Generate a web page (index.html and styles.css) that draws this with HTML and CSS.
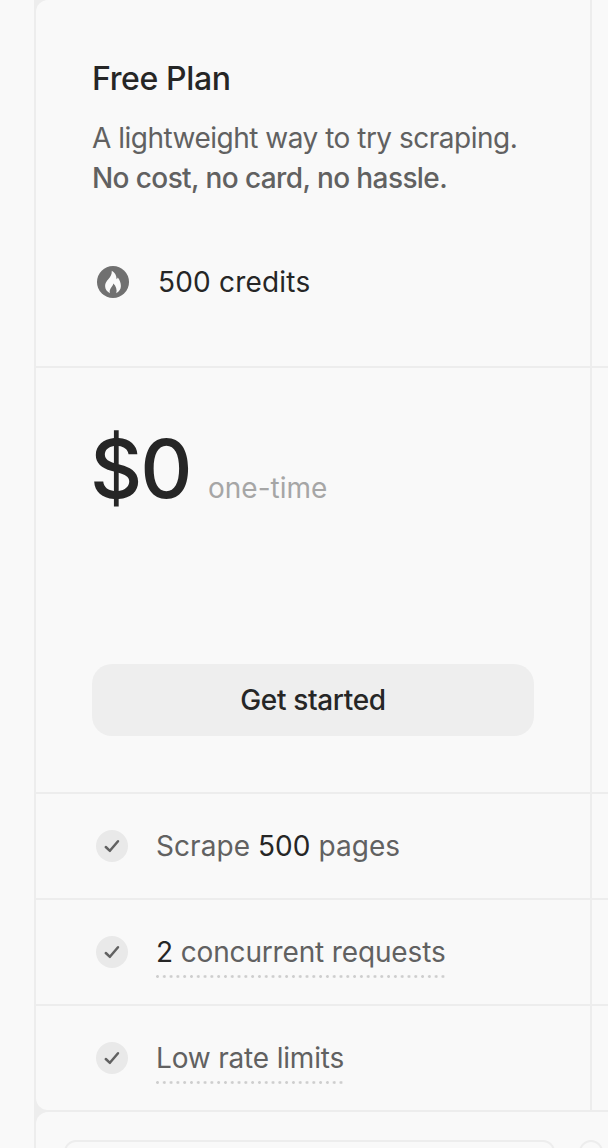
FILE: index.html
```html
<!DOCTYPE html>
<html lang="en">
<head>
<meta charset="utf-8">
<title>Pricing</title>
<link rel="stylesheet" href="styles.css">
</head>
<body>
<main class="pricing">
  <div class="plans">
    <article class="plan">
      <header class="intro">
        <h2 class="name">Free Plan</h2>
        <p class="desc"><span class="line-a">A lightweight way to try scraping.</span><br><strong class="line-b">No cost, no card, no hassle.</strong></p>
        <div class="credits">
          <svg class="icon" viewBox="0 0 32 32"><circle cx="16" cy="16" r="16" fill="#707070"/><path d="M14.8 4.8C17.8 6.4 19.4 9 19.6 13.2C20.1 12.9 20.5 12.3 20.8 11.6C22.9 14.3 23.9 17.3 23.9 20C23.9 23 22.4 25.4 19.3 27.2C20.2 23.6 19 20.2 16.3 17.6C16.1 19.8 14.6 20.8 13.6 22.4C12.6 24 12.5 25.4 12.9 27.2C9.8 25.6 8.1 23.2 8.1 20C8.1 17.2 9.4 15.4 11.3 13.2C13.4 10.8 14.9 8.8 14.8 4.8Z" fill="#f9f9f9"/></svg>
          <span class="credits-text">500 credits</span>
        </div>
      </header>
      <section class="cost">
        <div class="price"><span class="amount">$0</span><span class="period">one-time</span></div>
        <button class="cta" type="button"><span>Get started</span></button>
      </section>
      <div class="feature">
        <svg class="icon" viewBox="0 0 32 32"><circle cx="16" cy="16" r="16" fill="#e9e9e9"/><path d="M9.8 17L13.9 20.8L22 11.2" fill="none" stroke="#616161" stroke-width="2.5" stroke-linecap="round" stroke-linejoin="round"/></svg>
        <span class="label scrape">Scrape <b>500</b> pages</span>
      </div>
      <div class="feature">
        <svg class="icon" viewBox="0 0 32 32"><circle cx="16" cy="16" r="16" fill="#e9e9e9"/><path d="M9.8 17L13.9 20.8L22 11.2" fill="none" stroke="#616161" stroke-width="2.5" stroke-linecap="round" stroke-linejoin="round"/></svg>
        <span class="label hint requests"><b>2</b> concurrent requests</span>
      </div>
      <div class="feature last">
        <svg class="icon" viewBox="0 0 32 32"><circle cx="16" cy="16" r="16" fill="#e9e9e9"/><path d="M9.8 17L13.9 20.8L22 11.2" fill="none" stroke="#616161" stroke-width="2.5" stroke-linecap="round" stroke-linejoin="round"/></svg>
        <span class="label hint limits">Low rate limits</span>
      </div>
    </article>
    <article class="plan next">
      <div class="intro"></div>
      <div class="cost"></div>
      <div class="feature"></div>
      <div class="feature"></div>
      <div class="feature"></div>
    </article>
  </div>
  <section class="below">
    <div class="box wide"></div>
    <div class="box round"></div>
  </section>
</main>
</body>
</html>
```
FILE: styles.css
```css
* { box-sizing: border-box; }
body {
  margin: 0;
  height: 1148px;
  overflow: hidden;
  background: #f9f9f9;
  color: #262626;
  font-family: Inter, "Liberation Sans", sans-serif;
  font-size: 28px;
  line-height: 40px;
}
h2, p { margin: 0; font-weight: inherit; }
.pricing {
  display: grid;
  grid-template-rows: 1110px 36px;
  gap: 2px;
  height: 1148px;
  margin-left: 34px;
  padding-left: 2px;
  background: #ededed;
}
.plans { display: grid; grid-template-columns: 554px 1fr; gap: 2px; }
.plan { display: grid; grid-template-rows: 366px 424px 104px 104px 104px; gap: 2px; }
.intro, .cost, .feature { background: #f9f9f9; }
.plan:first-child .intro { border-top-left-radius: 12px; padding: 59px 56px 0; }
.last { border-bottom-left-radius: 12px; }
.name { font-size: 32px; font-weight: 500; letter-spacing: -0.36px; white-space: nowrap; }
.desc { margin-top: 19px; color: #616161; white-space: nowrap; }
.line-a { letter-spacing: -0.5px; }
.line-b { font-weight: 500; letter-spacing: -0.6px; }
.credits { display: flex; align-items: center; gap: 29px; margin-top: 64px; padding-left: 5px; }
.icon { width: 32px; height: 32px; flex: none; display: block; }
.credits-text { letter-spacing: 0.2px; white-space: nowrap; }
.plan:first-child .cost { display: flex; flex-direction: column; justify-content: space-between; padding: 61px 56px 56px; }
.price { display: flex; align-items: baseline; line-height: 80px; white-space: nowrap; }
.amount { width: 118px; margin-left: -2px; font-size: 81px; font-weight: 500; letter-spacing: -2px; }
.period { color: #a6a6a6; }
.cta {
  height: 72px;
  padding: 0;
  border: 0;
  border-radius: 20px;
  background: #eeeeee;
  color: #262626;
  font: 500 28px/40px Inter, "Liberation Sans", sans-serif;
  letter-spacing: -0.36px;
}
.feature { display: flex; align-items: center; gap: 28px; padding-left: 60px; }
.next .feature { padding: 0; }
.label { color: #616161; white-space: nowrap; }
.label b { color: #262626; font-weight: 400; }
.scrape { letter-spacing: 0.06px; }
.requests { letter-spacing: -0.15px; }
.limits { letter-spacing: -0.18px; }
.hint {
  padding: 6px 0;
  background: radial-gradient(circle at 1.5px 1.5px, #cecece 1.1px, transparent 1.7px) 0 100% / 6.8px 3px repeat-x;
}
.below { display: flex; gap: 24px; padding: 28px 0 0 28px; background: #f9f9f9; border-top-left-radius: 12px; overflow: hidden; }
.box { height: 40px; flex: none; border: 2px solid #ededed; border-radius: 12px; }
.wide { width: 491px; }
.round { width: 24px; }
```
